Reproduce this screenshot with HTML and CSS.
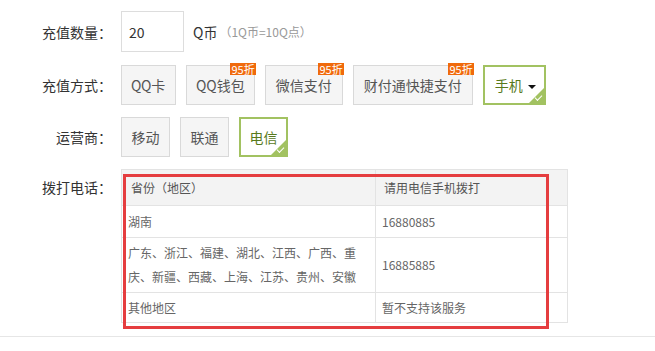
FILE: index.html
```html
<!DOCTYPE html>
<html>
	<head>
		<meta charset="UTF-8">
		<title>充值</title>
		<link rel="stylesheet" href="styles.css">
	</head>
	<body>
		<div class="form">
			<div class="row">
				<span class="label">充值数量：</span>
				<div class="field">
					<input type="text" class="amount" value="20"/>
					<span class="unit">Q币</span><span class="tip">（1Q币=10Q点）</span>
				</div>
			</div>
			<div class="row">
				<span class="label">充值方式：</span>
				<div class="field">
					<span class="opt qq">QQ卡</span>
					<span class="opt qq">QQ钱包<i class="badge">95折</i></span>
					<span class="opt">微信支付<i class="badge">95折</i></span>
					<span class="opt">财付通快捷支付<i class="badge">95折</i></span>
					<span class="opt on drop">手机<b class="arrow"></b></span>
				</div>
			</div>
			<div class="row">
				<span class="label">运营商：</span>
				<div class="field">
					<span class="opt small">移动</span>
					<span class="opt small">联通</span>
					<span class="opt small on">电信</span>
				</div>
			</div>
			<div class="row">
				<span class="label tl">拨打电话：</span>
				<div class="field">
					<div class="tablebox">
						<table class="phones">
							<tr class="head"><th class="c1">省份（地区）</th><th>请用电信手机拨打</th></tr>
							<tr class="r1"><td class="c1">湖南</td><td>16880885</td></tr>
							<tr class="r2"><td class="c1">广东、浙江、福建、湖北、江西、广西、重庆、新疆、西藏、上海、江苏、贵州、安徽</td><td>16885885</td></tr>
							<tr class="r3"><td class="c1">其他地区</td><td>暂不支持该服务</td></tr>
						</table>
						<div class="mark"></div>
					</div>
				</div>
			</div>
		</div>
		<div class="bottom-line"></div>
	</body>
</html>
```
FILE: styles.css
```css
body{
	margin:0;
	font-family:"Noto Sans CJK SC",sans-serif;
	color:#333;
	background:#fff;
}
.form{
	padding-top:11px;
}
.row{
	display:flex;
	align-items:center;
	margin-bottom:12px;
}
.row:first-child{
	margin-bottom:13px;
}
.row:last-child{
	align-items:flex-start;
	margin-bottom:13px;
}
.label{
	width:112px;
	text-align:right;
	font-size:14px;
	color:#333;
	margin-right:9px;
	flex-shrink:0;
}
.label.tl{
	margin-top:8px;
}
.field{
	display:flex;
	align-items:center;
	gap:10px;
}
.amount{
	box-sizing:border-box;
	width:63px;
	height:41px;
	border:1px solid #ddd;
	padding:0 0 0 7px;
	font-family:inherit;
	font-size:14px;
	color:#333;
	outline:none;
	margin-right:-1px;
}
.unit{
	font-size:14px;
	color:#333;
}
.tip{
	font-size:12px;
	color:#999;
	margin-left:-8px;
}
.opt{
	position:relative;
	box-sizing:border-box;
	height:40px;
	line-height:38px;
	padding:0 10px;
	border:1px solid #d9d9d9;
	background:#f5f5f5;
	font-size:14px;
	color:#555;
	white-space:nowrap;
}
.opt.qq{
	padding:0 9px;
}
.opt.qq:first-child{
	padding:0 10px 0 9px;
	letter-spacing:-0.3px;
}
.opt.small{
	width:49px;
	padding:0;
	text-align:center;
}
.opt.on{
	border:2px solid #a2c261;
	background:#fff;
	line-height:36px;
	color:#587a1c;
}
.opt.drop{
	padding:0 8px 0 10px;
}
.opt.on::after{
	content:"";
	position:absolute;
	right:0;
	bottom:0;
	width:0;
	height:0;
	border-left:15px solid transparent;
	border-bottom:15px solid #a2c261;
}
.opt.on::before{
	content:"";
	position:absolute;
	right:2px;
	bottom:4px;
	width:6px;
	height:3px;
	border-left:1.5px solid #fff;
	border-bottom:1.5px solid #fff;
	transform:rotate(-45deg);
	z-index:1;
}
.arrow{
	display:inline-block;
	width:0;
	height:0;
	margin-left:5px;
	vertical-align:middle;
	border-left:4px solid transparent;
	border-right:4px solid transparent;
	border-top:4px solid #111;
}
.badge{
	position:absolute;
	top:-3px;
	right:-2px;
	height:12px;
	line-height:12px;
	padding:0 1px;
	background:#f06a0c;
	color:#fff;
	font-style:normal;
	font-size:11px;
}
.tablebox{
	position:relative;
}
.phones{
	border-collapse:collapse;
	width:447px;
	font-size:12px;
	color:#666;
}
.phones th,.phones td{
	border:1px solid #e3e3e3;
	text-align:left;
	font-weight:normal;
	padding:0 5px 0 6px;
}
.phones th{
	background:#f3f3f3;
	color:#555;
	height:35px;
	padding-left:8px;
}
.phones .c1{
	width:230px;
	padding-right:14px;
}
.phones th.c1{
	padding-left:9px;
}
.phones td{
	color:#666;
}
.r1 td{
	height:31px;
}
.r2 td{
	height:54px;
	line-height:24px;
}
.r3 td{
	height:29px;
}
.mark{
	position:absolute;
	left:2px;
	top:5px;
	width:420px;
	height:149px;
	border:3px solid #e53d3f;
}
.bottom-line{
	border-top:1px solid #e6e6e6;
}
```
